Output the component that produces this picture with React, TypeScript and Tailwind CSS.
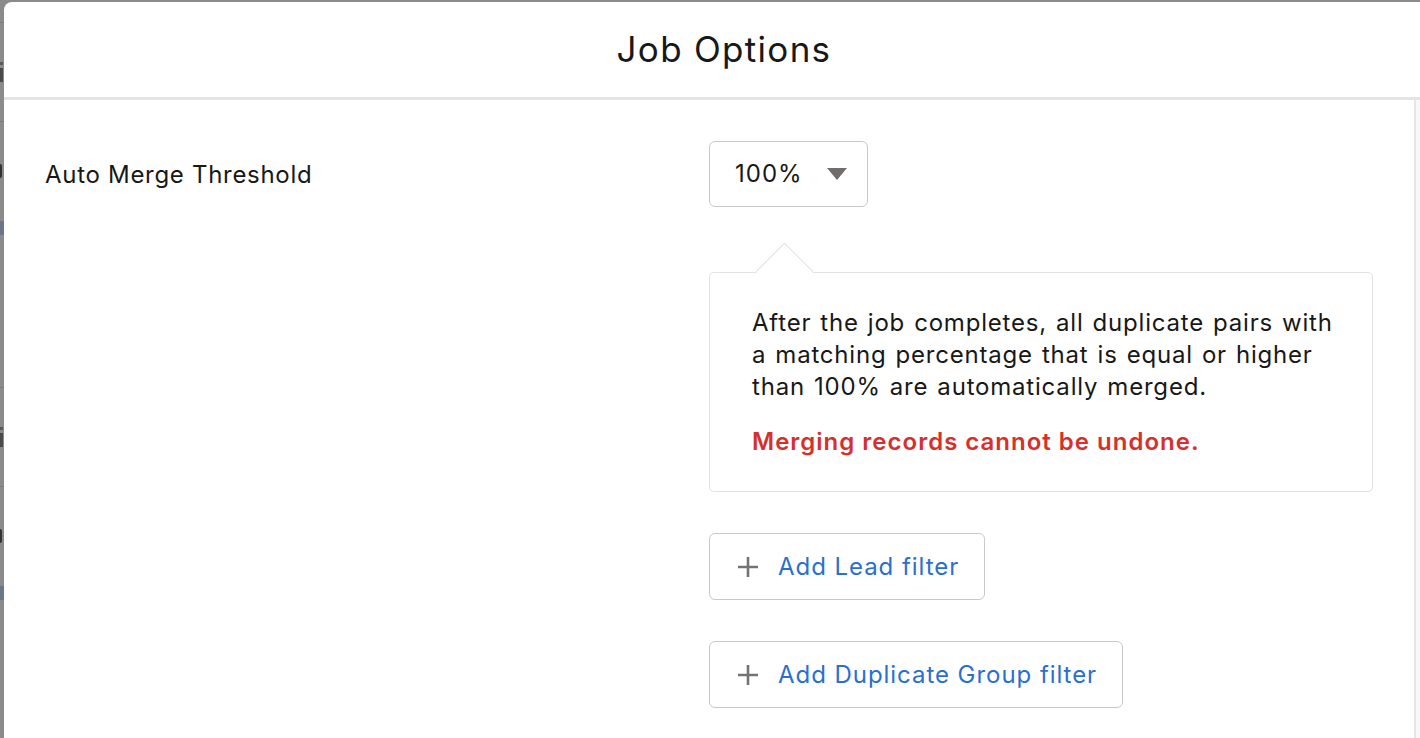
import React from "react";

const font = { fontFamily: "Inter, 'Noto Sans', 'Liberation Sans', sans-serif" };

function BackdropStrip() {
  // sliver of the page behind the dimmed overlay
  const block = (
    <div className="flex flex-col">
      <div className="h-[22px]" />
      <div className="h-px bg-[#7c7c7c]" />
      <div className="h-[39px]" />
      <div className="h-[3px] w-[3px] bg-[#5a5a5a]" />
      <div className="h-[3px]" />
      <div className="h-[14px] w-[3px] bg-[#4a4a4a]" />
      <div className="h-[39px]" />
      <div className="h-px bg-[#7c7c7c]" />
      <div className="h-[42px]" />
      <div className="h-[14px] w-[2px] rounded-r-full bg-[#333]" />
      <div className="h-[43px]" />
      <div className="h-[14px] bg-[#6c7689]" />
    </div>
  );
  return (
    <div className="flex w-[4px] shrink-0 flex-col overflow-hidden bg-[#8b8b8b]">
      {block}
      <div className="h-[130px]" />
      {block}
    </div>
  );
}

function PlusIcon() {
  return (
    <svg width="22" height="22" viewBox="0 0 22 22" className="shrink-0">
      <path d="M11 1v20M1 11h20" stroke="#737373" strokeWidth="2.6" />
    </svg>
  );
}

function FilterButton({ label }: { label: string }) {
  return (
    <button className="flex h-[67px] items-center gap-[19px] self-start rounded-[6px] border-[1.5px] border-[#c9c9c9] bg-white pl-[27px] pr-[25px] text-[24px] tracking-[0.95px] text-[#2b6fce]">
      <PlusIcon />
      <span>{label}</span>
    </button>
  );
}

export default function App() {
  return (
    <div
      className="flex h-[738px] w-[1420px] overflow-hidden bg-[#8b8b8b] text-[#181818]"
      style={font}
    >
      <BackdropStrip />
      <div className="mt-[2px] flex w-[1440px] shrink-0 flex-col overflow-hidden rounded-tl-[8px] bg-white">
        <header className="flex h-[98px] shrink-0 items-center justify-center border-b-[3px] border-[#e4e4e4]">
          <h1 className="text-[35px] font-normal tracking-[1.3px]">Job Options</h1>
        </header>
        <div className="flex flex-1 overflow-hidden">
          <div className="flex w-[1410px] shrink-0 pl-[41px] pt-[41px] text-[24px] tracking-[0.7px]">
            <div className="w-[664px] shrink-0 pt-[18px] leading-[32px]">
              Auto Merge Threshold
            </div>
            <div className="flex flex-col">
              <button className="flex h-[66px] w-[159px] items-center justify-between rounded-[6px] border-[1.5px] border-[#c9c9c9] bg-white pl-[25px] pr-[20px] tracking-[1px] text-[#181818]">
                <span>100%</span>
                <svg width="20" height="12" viewBox="0 0 20 12">
                  <path d="M0 0h20L10 12z" fill="#706e6b" />
                </svg>
              </button>

              <div className="relative mt-[65px] w-[664px] rounded-[5px] border-[1.5px] border-[#e2e2e2] bg-white pb-[33px] pl-[42px] pr-[39px] pt-[34px] leading-[32px]">
                <div className="absolute left-[54px] top-[-22px] h-[41px] w-[41px] rotate-45 border-l-[1.5px] border-t-[1.5px] border-[#e2e2e2] bg-white" />
                <p className="relative tracking-[0.8px] [word-spacing:1.5px]">
                  After the job completes, all duplicate pairs with a matching percentage that is equal or
                  higher than 100% are automatically merged.
                </p>
                <p className="relative mt-[23px] font-semibold tracking-[1px] text-[#d7302c]">
                  Merging records cannot be undone.
                </p>
              </div>

              <div className="mt-[41px] flex flex-col gap-[41px]">
                <FilterButton label="Add Lead filter" />
                <FilterButton label="Add Duplicate Group filter" />
              </div>
            </div>
          </div>
          <div className="w-[6px] shrink-0 border-l-[2px] border-[#e6e6e6] bg-[#f8f8f8]" />
        </div>
      </div>
    </div>
  );
}
